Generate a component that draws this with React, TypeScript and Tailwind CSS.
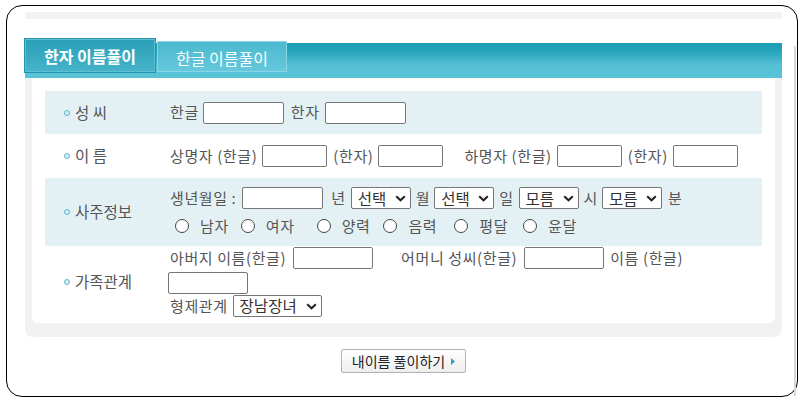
import React from "react";

const FONT = { fontFamily: '"Noto Sans CJK KR", "Noto Sans", sans-serif' };

function Box({ w, className = "" }: { w: number; className?: string }) {
  return (
    <span
      className={`inline-block h-[22px] shrink-0 rounded-[2px] border border-[#767676] bg-white ${className}`}
      style={{ width: w }}
    />
  );
}

function Select({ w, label }: { w: number; label: string }) {
  return (
    <span
      className="relative flex h-[22px] shrink-0 items-center rounded-[2px] border border-[#767676] bg-white pl-[6px] text-[15.5px] leading-none tracking-normal text-[#333]"
      style={{ width: w }}
    >
      <span className="whitespace-nowrap">{label}</span>
      <svg className="absolute right-[4px] top-[7px]" width="11" height="7" viewBox="0 0 11 7">
        <path d="M1.2 1.2 5.5 5.3 9.8 1.2" fill="none" stroke="#222" strokeWidth="2" />
      </svg>
    </span>
  );
}

function Radio({ label }: { label: string }) {
  return (
    <span className="flex items-center gap-[11px]">
      <span className="h-[14px] w-[14px] rounded-full border border-[#444] bg-white" />
      <span>{label}</span>
    </span>
  );
}

function Row({
  label,
  blue,
  h,
  children,
}: {
  label: string;
  blue?: boolean;
  h: number;
  children: React.ReactNode;
}) {
  return (
    <div className={`flex ${blue ? "bg-[#e3f1f5]" : "bg-white"}`} style={{ height: h }}>
      <div className="flex w-[125px] shrink-0 items-center gap-[5px] pl-[19px] text-[15.5px] text-[#555]">
        <span className="h-[6px] w-[6px] rounded-full border-[1.5px] border-[#5fb4d2] bg-[#d6eef6]" />
        <span>{label}</span>
      </div>
      <div className="flex flex-col justify-center text-[15px] tracking-[0.6px] text-[#555]">{children}</div>
    </div>
  );
}

export default function App() {
  return (
    <div className="h-[403px] w-[804px] bg-white pl-[6px] pt-[5px]" style={FONT}>
      <div className="flex h-[392px] w-[792px] rounded-[16px] border border-black">
        <div className="ml-[18px] flex w-[757px] flex-col">
          <div className="mt-[6px] h-[7px] rounded-[3px] bg-[#f2f2f2]" />

          {/* tabs + bar */}
          <div className="mt-[20px] flex h-[39px] items-start bg-[linear-gradient(to_bottom,transparent_4px,#1a9db6_4px,#2aa7be_14px,#56c0d6_26px,#5ac3d8_100%)]">
            <div className="flex h-[33px] w-[130px] items-center justify-center border border-[#5ebfd1] bg-[linear-gradient(to_bottom,#2aa0b9,#45b3c9)] text-[16px] font-bold text-white shadow-[0_0_0_1px_#2593aa]">
              한자 이름풀이
            </div>
            <div className="ml-[2px] mt-[2px] flex h-[31px] w-[130px] items-center justify-center border border-[#8ad5e3] bg-[linear-gradient(to_bottom,#4ab9d0,#66c8dc)] pt-[3px] text-[16px] text-white">
              한글 이름풀이
            </div>
          </div>

          {/* panel */}
          <div className="rounded-b-[8px] bg-[#f1f1f1] px-[7px] pb-[14px]">
            <div className="rounded-b-[6px] bg-white px-[13px] pb-[5px] pt-[13px]">
              <Row label="성 씨" blue h={43}>
                <div className="flex items-center">
                  <span>한글</span>
                  <Box w={81} className="ml-[4px]" />
                  <span className="ml-[7px]">한자</span>
                  <Box w={81} className="ml-[5px]" />
                </div>
              </Row>
              <Row label="이 름" h={44}>
                <div className="flex items-center">
                  <span>상명자 (한글)</span>
                  <Box w={65} className="ml-[5px]" />
                  <span className="ml-[6px]">(한자)</span>
                  <Box w={65} className="ml-[5px]" />
                  <span className="ml-[21px]">하명자 (한글)</span>
                  <Box w={65} className="ml-[5px]" />
                  <span className="ml-[6px]">(한자)</span>
                  <Box w={65} className="ml-[5px]" />
                </div>
              </Row>
              <Row label="사주정보" blue h={68}>
                <div className="flex items-center">
                  <span>생년월일 :</span>
                  <Box w={81} className="ml-[6px]" />
                  <span className="ml-[8px]">년</span>
                  <span className="ml-[5px]"><Select w={60} label="선택" /></span>
                  <span className="ml-[5px]">월</span>
                  <span className="ml-[4px]"><Select w={60} label="선택" /></span>
                  <span className="ml-[5px]">일</span>
                  <span className="ml-[5px]"><Select w={60} label="모름" /></span>
                  <span className="ml-[5px]">시</span>
                  <span className="ml-[4px]"><Select w={60} label="모름" /></span>
                  <span className="ml-[6px]">분</span>
                </div>
                <div className="mt-[5px] flex items-center pl-[5px]">
                  <Radio label="남자" />
                  <span className="ml-[12px]"><Radio label="여자" /></span>
                  <span className="ml-[22px]"><Radio label="양력" /></span>
                  <span className="ml-[13px]"><Radio label="음력" /></span>
                  <span className="ml-[17px]"><Radio label="평달" /></span>
                  <span className="ml-[15px]"><Radio label="윤달" /></span>
                </div>
              </Row>
              <Row label="가족관계" h={72}>
                <div className="flex items-center">
                  <span>아버지 이름(한글)</span>
                  <Box w={80} className="ml-[7px]" />
                  <span className="ml-[28px]">어머니 성씨(한글)</span>
                  <Box w={80} className="ml-[7px]" />
                  <span className="ml-[6px]">이름 (한글)</span>
                </div>
                <div className="mt-[2px] flex -ml-[2px]">
                  <Box w={80} />
                </div>
                <div className="mt-[1px] flex items-center">
                  <span>형제관계</span>
                  <span className="ml-[5px]"><Select w={89} label="장남장녀" /></span>
                </div>
              </Row>
            </div>
          </div>

          {/* submit */}
          <div className="mt-[12px] flex justify-center">
            <button
              type="button"
              className="flex h-[24px] w-[125px] items-center justify-center gap-[6px] rounded-[2px] border border-[#b3b3b3] bg-[linear-gradient(to_bottom,#ffffff,#ededed)] text-[14px] text-[#222]"
            >
              <span>내이름 풀이하기</span>
              <svg width="4" height="7" viewBox="0 0 4 7">
                <path d="M0 0 4 3.5 0 7z" fill="#2aa5bf" />
              </svg>
            </button>
          </div>
        </div>
        <div className="ml-auto mr-[1px] mt-[40px] w-[2px] bg-[#d6d6d6]" />
      </div>
    </div>
  );
}
